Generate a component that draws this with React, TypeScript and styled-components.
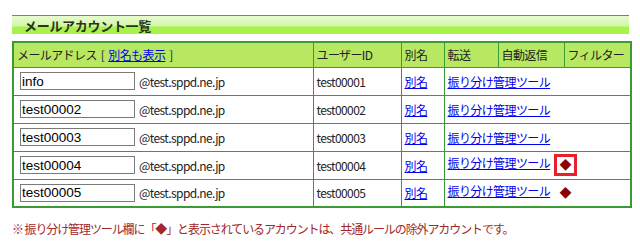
import React from 'react';
import styled, { createGlobalStyle } from 'styled-components';

const GlobalStyle = createGlobalStyle`
  html, body {
    margin: 0;
    padding: 0;
    background: #ffffff;
  }
  body {
    font-family: "Noto Sans CJK JP", "Liberation Sans", sans-serif;
    font-size: 12px;
    letter-spacing: -0.6px;
    color: #222;
  }
`

const Page = styled.div`
  width: 640px;
  height: 246px;
  padding: 15px 11px 0 12px;
  box-sizing: border-box;
`

const TitleBar = styled.div`
  height: 18px;
  border-top: 1px solid #5a9e3c;
  background: linear-gradient(to bottom, #e8fbd0 0%, #d2f7a8 55%, #a8f24c 62%, #a8f24c 100%);
  padding-left: 12px;
  display: flex;
  align-items: center;

  h1 {
    margin: 0;
    font-size: 13px;
    font-weight: bold;
    color: #2a3318;
    line-height: 1;
    letter-spacing: -0.3px;
  }
`

const Table = styled.table`
  margin-top: 7px;
  width: 618px;
  border-collapse: collapse;
  border: 2px solid #3a9a34;
  table-layout: fixed;

  th, td {
    border: 1px solid #3a9a34;
    padding: 0 3px;
    text-align: left;
    white-space: nowrap;
  }
`

const HeadRow = styled.tr`
  height: 25px;
  background: #b8e862;

  th {
    font-weight: normal;
    color: #222;
  }
`

const BodyRow = styled.tr`
  height: 28px;
  td {
    vertical-align: middle;
  }
`

const Link = styled.a`
  color: #0000ee;
  text-decoration: underline;
  cursor: pointer;
`

const Bracket = styled.span`
  margin: 0 4px;
`

const AddressCell = styled.div`
  display: flex;
  align-items: center;
  gap: 4px;
  padding-left: 3px;
`

const NameInput = styled.input`
  width: 115px;
  height: 18px;
  box-sizing: border-box;
  border: 1px solid #7a7a7a;
  padding: 0 1px;
  margin: 0;
  font-family: "Liberation Sans", Arial, sans-serif;
  font-size: 13.5px;
  letter-spacing: 0;
  color: #000;
  outline: none;
`

const Domain = styled.span`
  font-size: 12px;
  color: #222;
`

const Mark = styled.span<{ $boxed?: boolean }>`
  display: inline-flex;
  align-items: center;
  justify-content: center;
  width: 23px;
  height: 22px;
  box-sizing: border-box;
  margin-left: 4px;
  vertical-align: middle;
  border: 3px solid ${({ $boxed }) => ($boxed ? '#e8202a' : 'transparent')};
  color: #8b0000;
  font-size: 12px;
  line-height: 1;
  letter-spacing: 0;
`

const Note = styled.p`
  margin: 12px 0 0 0;
  color: #a0282a;
  font-size: 12px;
  letter-spacing: -1.1px;
`

const accounts = [
  { name: 'info', id: 'test00001', mark: false, boxed: false },
  { name: 'test00002', id: 'test00002', mark: false, boxed: false },
  { name: 'test00003', id: 'test00003', mark: false, boxed: false },
  { name: 'test00004', id: 'test00004', mark: true, boxed: true },
  { name: 'test00005', id: 'test00005', mark: true, boxed: false },
]

const App: React.FC<{}> = () => {
  return (
    <Page>
      <GlobalStyle />
      <TitleBar>
        <h1>メールアカウント一覧</h1>
      </TitleBar>
      <Table>
        <colgroup>
          <col style={{ width: 300 }} />
          <col style={{ width: 88 }} />
          <col style={{ width: 43 }} />
          <col style={{ width: 54 }} />
          <col style={{ width: 66 }} />
          <col style={{ width: 67 }} />
        </colgroup>
        <thead>
          <HeadRow>
            <th>
              メールアドレス<Bracket>[</Bracket>
              <Link>別名も表示</Link>
              <Bracket>]</Bracket>
            </th>
            <th>ユーザーID</th>
            <th>別名</th>
            <th>転送</th>
            <th>自動返信</th>
            <th>フィルター</th>
          </HeadRow>
        </thead>
        <tbody>
          {accounts.map((a) => (
            <BodyRow key={a.id}>
              <td>
                <AddressCell>
                  <NameInput defaultValue={a.name} />
                  <Domain>@test.sppd.ne.jp</Domain>
                </AddressCell>
              </td>
              <td>{a.id}</td>
              <td>
                <Link>別名</Link>
              </td>
              <td colSpan={3}>
                <Link>振り分け管理ツール</Link>
                {a.mark && <Mark $boxed={a.boxed}>◆</Mark>}
              </td>
            </BodyRow>
          ))}
        </tbody>
      </Table>
      <Note>※ 振り分け管理ツール欄に「◆」と表示されているアカウントは、共通ルールの除外アカウントです。</Note>
    </Page>
  )
}

export default App
